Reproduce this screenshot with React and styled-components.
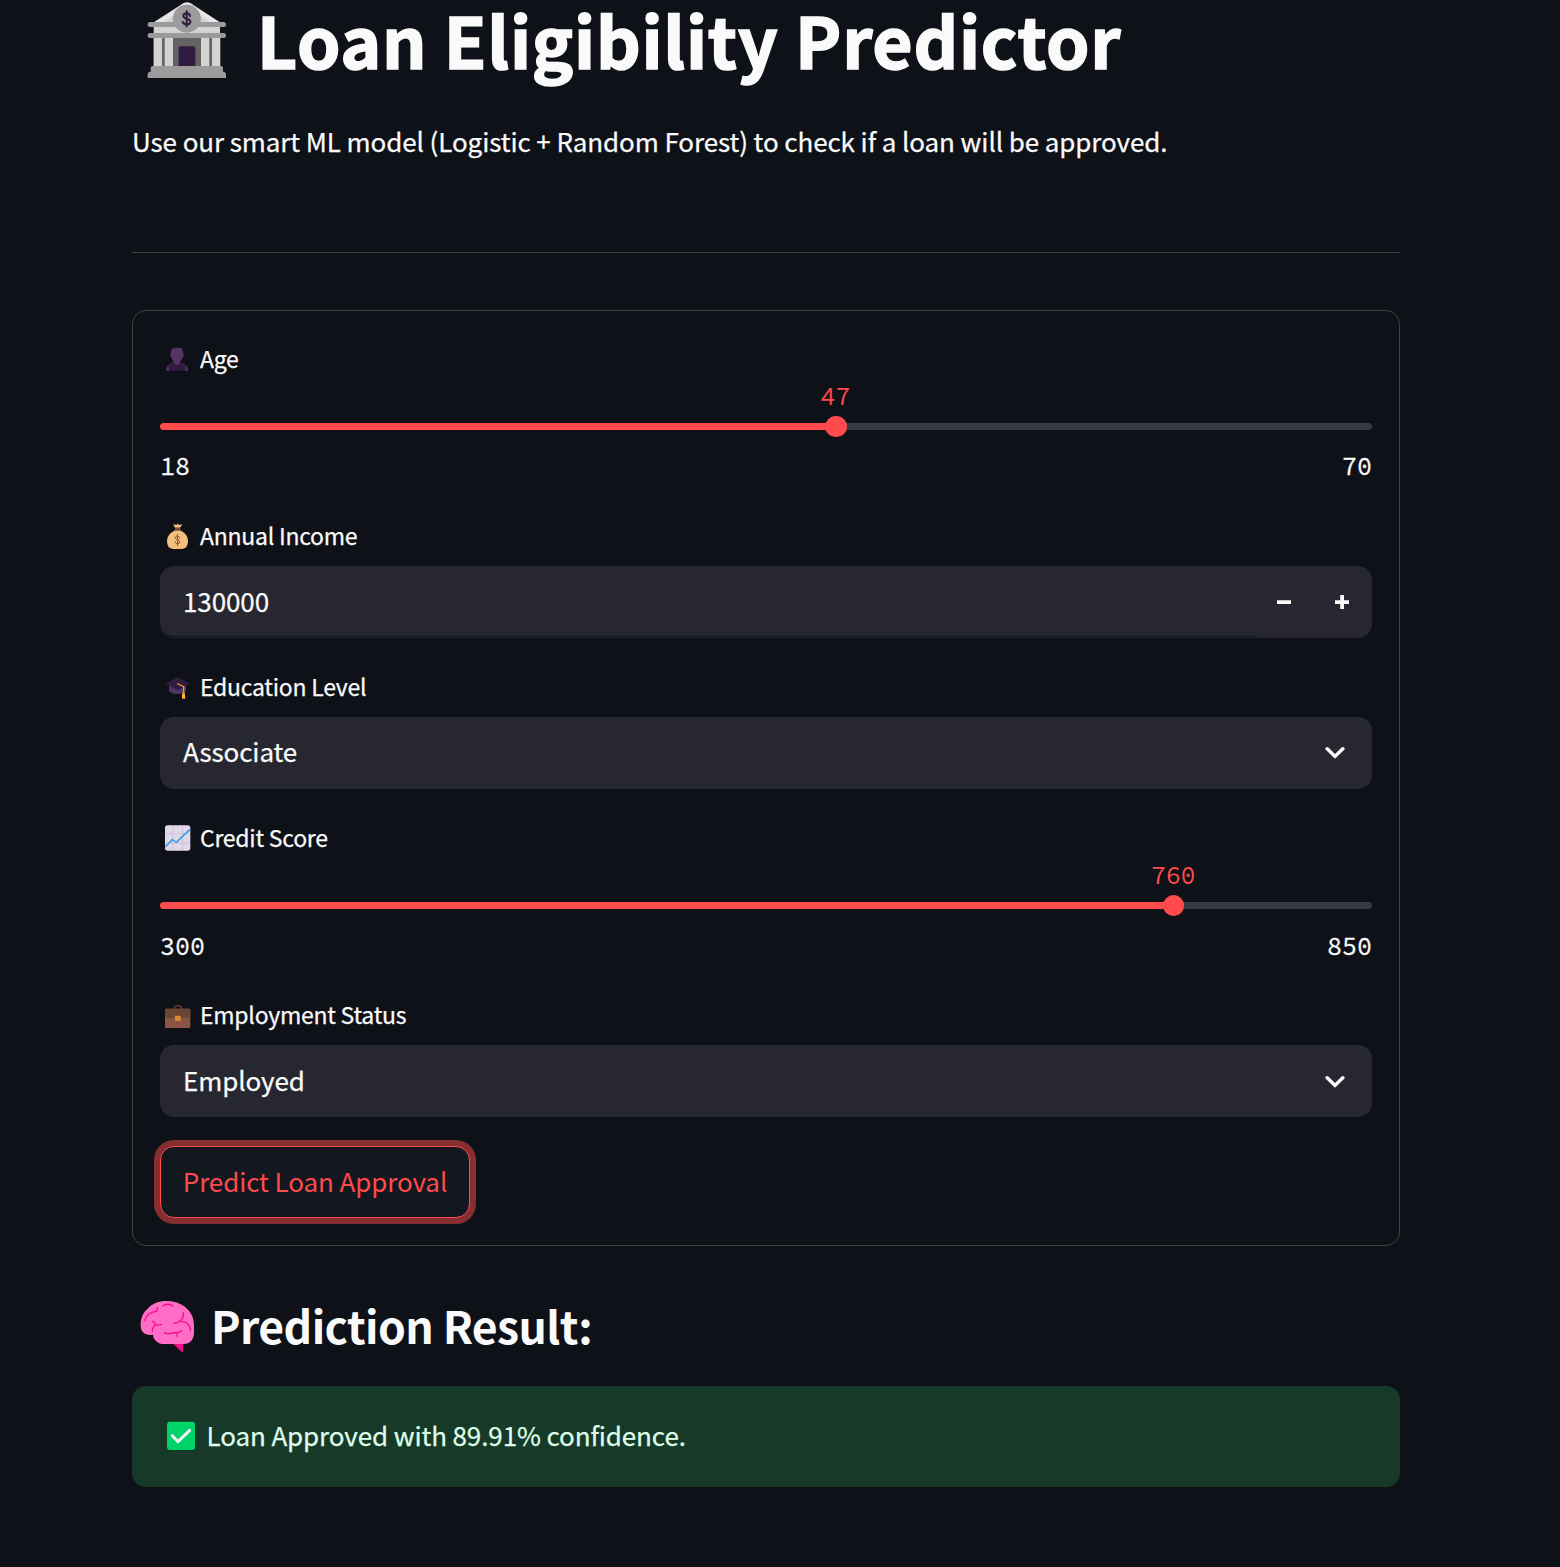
import React, { useState } from 'react';
import styled, { createGlobalStyle } from 'styled-components';

const GlobalStyle = createGlobalStyle`
  * { box-sizing: border-box; }
  html, body { margin: 0; background: #0e1117; }
  body, button, input {
    font-family: "Source Sans Pro", "Noto Sans CJK SC", "Open Sans", sans-serif;
    color: #fafafa;
  }
`;

const Page = styled.main`
  min-height: 1567px;
  padding: 0 160px 80px 132px;
  background: #0e1117;
`;

const Title = styled.h1`
  display: flex;
  height: 78px;
  margin: 0;
  font-size: 69.5px;
  font-weight: 700;
  line-height: 77px;
  letter-spacing: 0.75px;
  white-space: nowrap;
  -webkit-text-stroke: 1.6px #fafafa;
`;

const Intro = styled.p`
  margin: 42px 0 0;
  font-size: 26px;
  line-height: 42px;
  letter-spacing: -0.095px;
  white-space: nowrap;
  -webkit-text-stroke: 0.25px #fafafa;
`;

const Divider = styled.hr`
  height: 1px;
  margin: 90px 0 57px;
  border: 0;
  background: #3d4044;
`;

const Form = styled.form`
  display: flex;
  flex-direction: column;
  gap: 28px;
  height: 936px;
  padding: 27px;
  border: 1px solid #3d4044;
  border-radius: 14px;
`;

const Field = styled.div`
  display: flex;
  flex-direction: column;
`;

const Label = styled.label`
  display: flex;
  height: 42px;
  font-size: 23px;
  line-height: 41px;
  letter-spacing: -0.25px;
  white-space: nowrap;
  -webkit-text-stroke: 0.25px #fafafa;
`;

const Glyph = styled.svg`
  display: block;
  flex: none;
`;

const Control = styled.div`
  display: flex;
  height: 72px;
  margin-top: 9px;
  border-radius: 14px;
  background: #262730;
  font-size: 26px;
  letter-spacing: -0.1px;
  overflow: hidden;
`;

const NumberInput = styled.input`
  flex: 1;
  min-width: 0;
  height: 71px;
  padding: 0 22px 1px 23px;
  border: 0;
  border-bottom: 1px solid #0e1117;
  border-radius: 14px 0 0 14px;
  outline: 0;
  background: transparent;
  font-size: 26px;
  letter-spacing: -0.1px;
  -webkit-text-stroke: 0.25px #fafafa;
`;

const Steppers = styled.div`
  display: flex;
  width: 117px;
  padding-right: 1px;
`;

const StepButton = styled.button`
  display: grid;
  place-items: center;
  width: 58px;
  height: 72px;
  padding: 0;
  border: 0;
  background: transparent;
`;

const Selected = styled.span`
  flex: 1;
  padding-left: 23px;
  line-height: ${p => p.$line}px;
  -webkit-text-stroke: 0.25px #fafafa;
`;

const Arrow = styled.span`
  display: grid;
  place-items: center;
  width: 75px;
  height: ${p => p.$line + 5}px;
`;

const Track = styled.div`
  position: relative;
  height: 7px;
  margin-top: 43px;
  border-radius: 4px;
  background: linear-gradient(to right, #ff4b4b ${p => p.$fill}%, #363943 ${p => p.$fill}%);
`;

const Thumb = styled.div`
  position: absolute;
  top: 50%;
  left: ${p => p.$at}%;
  width: 21.8px;
  height: 21.8px;
  border-radius: 50%;
  background: #ff4b4b;
  transform: translate(-50%, -50%);
`;

const ThumbValue = styled.span`
  position: absolute;
  bottom: 26px;
  left: calc(50% - 0.5px);
  color: #ff4b4b;
  font: 25px/30px "Source Code Pro", "Liberation Mono", monospace;
  letter-spacing: -0.2px;
  transform: translateX(-50%);
`;

const Range = styled.div`
  display: flex;
  justify-content: space-between;
  height: 38px;
  margin-top: 19px;
  font: 25px/${p => p.$line}px "Source Code Pro", "Liberation Mono", monospace;
  -webkit-text-stroke: 0.3px #fafafa;
`;

const Submit = styled.button`
  align-self: flex-start;
  width: 310px;
  height: 72px;
  margin-top: 1px;
  padding: 0 0 4px;
  border: 1px solid #ff4b4b;
  border-radius: 14px;
  background: #13171f;
  box-shadow: 0 0 0 6px rgba(255, 75, 75, 0.5);
  color: #ff4b4b;
  font-size: 26px;
  letter-spacing: -0.1px;
  white-space: nowrap;
`;

const ResultTitle = styled.h2`
  display: flex;
  height: 70px;
  margin: 44px 0 26px;
  font-size: 44.5px;
  font-weight: 700;
  line-height: 69px;
  letter-spacing: -0.6px;
  white-space: nowrap;
`;

const Alert = styled.div`
  display: flex;
  height: 101px;
  padding-left: 28px;
  border-radius: 14px;
  background: #173928;
  color: #dffde9;
  font-size: 26px;
  line-height: 98px;
  letter-spacing: -0.11px;
  -webkit-text-stroke: 0.25px #dffde9;
`;

const Text = styled.span`
  margin-left: ${p => p.$shift || 0}px;
`;

const BankIcon = () => (
  <Glyph width="124" height="78" viewBox="6 0 372 234" strokeWidth="0">
    <path d="M69 68 160 10Q171 3 182 10L272 68Z" fill="#e6e6e6" />
    <path d="M98 68 128 48H214L244 68Z" fill="#d3d3d3" />
    <path d="M71 78H270V102H71Z" fill="#d3d3d3" />
    <path d="M71 112H270V202H71Z" fill="#636363" />
    <path d="M71 112H96V202H71ZM104 112H129V202H104ZM213 112H238V202H213ZM246 112H271V202H246Z" fill="#d3d3d3" />
    <rect x="53" y="66" width="235" height="15" rx="7.5" fill="#9b9b9b" />
    <rect x="53" y="99" width="235" height="15" rx="7.5" fill="#9b9b9b" />
    <circle cx="170.500" cy="56" r="42" fill="#9b9b9b" />
    <path d="M146 202V145Q146 139 152 139H190Q196 139 196 145V202Z" fill="#321b41" />
    <path d="M62 204Q62 198 68 198H273Q279 198 279 204V215Q288 216 288 223V234H53V223Q53 216 62 215Z" fill="#9b9b9b" />
    <path d="M180 48Q178 40 170 40Q160 40 160 48Q160 54 170 56Q181 58 181 65Q181 73 170 73Q161 73 158 66M170 34V79" fill="none" stroke="#321b41" strokeWidth="6" strokeLinecap="round" />
  </Glyph>
);

const PersonIcon = () => (
  <Glyph width="40" height="42" viewBox="30 9 120 126">
    <path d="M48 107Q49 90 59 85L73 80H90L103 85Q113 91 114 107Z" fill="#321b41" />
    <path d="M48 107Q49 96 54 93L58 107ZM114 107Q113 96 108 93L104 107ZM72 75H90V84L81 91 72 84Z" fill="#533566" />
    <path d="M63 54V50Q63 38 76 38H86Q99 38 99 50V54Q102 55 102 60Q102 66 98 67Q96 76 89 82Q81 88 73 82Q66 76 64 67Q60 66 60 60Q60 55 63 54Z" fill="#533566" />
  </Glyph>
);

const MoneyIcon = () => (
  <Glyph width="40" height="42" viewBox="30 15 120 126">
    <path d="M75 53 70 44Q72 41 76 44L80 45 83 40 87 45 91 44Q95 41 96 45L90 53Z" fill="#f3c07b" />
    <path d="M76 53H90L93 63H73Z" fill="#7d4e3c" />
    <path d="M73 62H93Q114 72 114 94Q114 116 96 117H69Q51 116 51 94Q51 72 73 62Z" fill="#f3c07b" />
    <path d="M89 84Q88 78 82 78Q76 78 76 83Q76 88 82 89Q89 90 89 96Q89 101 82 101Q76 101 75 95M82.500 73V106" fill="none" stroke="#8c5543" strokeWidth="3" strokeLinecap="round" />
  </Glyph>
);

const CapIcon = () => (
  <Glyph width="40" height="42" viewBox="30 3 120 126">
    <path d="M57 62H108V78Q100 87 83 87Q65 87 57 78Z" fill="#533566" />
    <path d="M47 56 83 36 120 56 86 75Q83 77 80 75Z" fill="#321b41" />
    <path d="M57 62 80 75Q83 77 86 75L108 62" fill="none" stroke="#43264f" strokeWidth="2" />
    <path d="M83 56 101 65V86" fill="none" stroke="#f9a72b" strokeWidth="3.500" strokeLinecap="round" />
    <path d="M98 83H104L106 101H96V88Z" fill="#ffb02e" />
  </Glyph>
);

const ChartIcon = () => (
  <Glyph width="40" height="42" viewBox="30 456 120 126">
    <rect x="45" y="481" width="76" height="76" rx="8" fill="#e1d8ec" />
    <path d="M68.500 483V555M97.500 483V555M47 505.500H119M47 534.500H119" stroke="#cdc4d6" strokeWidth="3.500" />
    <path d="M47 544 67 524 79 532 119 494" fill="none" stroke="#3a9fe5" strokeWidth="5" strokeLinejoin="round" strokeLinecap="round" />
  </Glyph>
);

const BriefcaseIcon = () => (
  <Glyph width="40" height="42" viewBox="45 12 120 126">
    <path d="M88 58V56Q88 47 98.500 47Q109 47 109 56V58" fill="none" stroke="#6d4534" strokeWidth="4" />
    <rect x="60" y="56" width="76" height="58" rx="4" fill="#8c5543" />
    <path d="M60 61Q60 56 65 56H131Q136 56 136 61V77Q136 84 129 84H67Q60 84 60 77Z" fill="#6d4534" />
    <rect x="90" y="77" width="17" height="16" rx="2" fill="#d9893b" />
  </Glyph>
);

const BrainIcon = () => (
  <Glyph width="78" height="70" viewBox="21 0 234 210">
    <path d="M143 157H174V183Q172 188 168 184L143 160Z" fill="#f70a8d" />
    <path d="M47 104C47 84 54 67 68 56C82 40 102 33 124 33C147 33 170 40 186 56C201 70 207 87 207 109V126C207 149 195 162 177 162H117C99 162 85 150 84 134C62 138 46 127 47 104Z" fill="#ff6dc6" />
    <path d="M58 92C64 75 76 65 95 64Q97 59 97 53M114 48C119 41 138 41 143 48M82 94Q90 96 93 104C82 110 82 117 82 125M93 104Q100 107 109 103M175 68C177 80 171 89 164 94Q156 100 147 99M164 94C183 93 194 102 197 121M118 129Q134 133 145 128C159 129 166 127 170 121M153 129Q158 132 157 139" fill="none" stroke="#f70a8d" strokeWidth="4" strokeLinecap="round" />
  </Glyph>
);

const CheckIcon = () => (
  <Glyph width="45" height="101" viewBox="105 288 135 303">
    <rect x="126" y="395" width="84" height="85" rx="9" fill="#00d26a" />
    <path d="M142 437 159 455 194 421" fill="none" stroke="#f4f4f4" strokeWidth="9" strokeLinecap="round" strokeLinejoin="round" />
  </Glyph>
);

const Chevron = () => (
  <Glyph width="20" height="14" viewBox="0 0 20 14">
    <path d="M2.200 2.800 10 10.400 17.800 2.800" fill="none" stroke="#fafafa" strokeWidth="3.500" strokeLinecap="round" strokeLinejoin="miter" />
  </Glyph>
);

const Minus = () => (
  <Glyph width="14" height="14" viewBox="0 0 14 14">
    <path d="M0 5.300H14V9H0Z" fill="#fafafa" />
  </Glyph>
);

const Plus = () => (
  <Glyph width="14" height="14" viewBox="0 0 14 14">
    <path d="M0 5.300H5.200V0H9V5.300H14V9H9V14H5.200V9H0Z" fill="#fafafa" />
  </Glyph>
);

function SliderField({ icon, label, min, max, value, line = 35 }) {
  const at = ((value - min) / (max - min)) * 100;
  return (
    <Field>
      <Label>{icon}<Text>{label}</Text></Label>
      <Track $fill={at}>
        <Thumb $at={at}><ThumbValue>{value}</ThumbValue></Thumb>
      </Track>
      <Range $line={line}><span>{min}</span><span>{max}</span></Range>
    </Field>
  );
}

function SelectField({ icon, label, value, line = 67 }) {
  return (
    <Field>
      <Label>{icon}<Text>{label}</Text></Label>
      <Control>
        <Selected $line={line}>{value}</Selected>
        <Arrow $line={line}><Chevron /></Arrow>
      </Control>
    </Field>
  );
}

export default function App() {
  const [income, setIncome] = useState(130000);
  return (
    <Page>
      <GlobalStyle />
      <Title><BankIcon /><Text $shift={1}>Loan Eligibility Predictor</Text></Title>
      <Intro>Use our smart ML model (Logistic + Random Forest) to check if a loan will be approved.</Intro>
      <Divider />
      <Form onSubmit={e => e.preventDefault()}>
        <SliderField icon={<PersonIcon />} label="Age" min={18} max={70} value={47} />
        <Field>
          <Label><MoneyIcon /><Text>Annual Income</Text></Label>
          <Control>
            <NumberInput value={income} onChange={e => setIncome(Number(e.target.value) || 0)} />
            <Steppers>
              <StepButton type="button" onClick={() => setIncome(income - 1000)}><Minus /></StepButton>
              <StepButton type="button" onClick={() => setIncome(income + 1000)}><Plus /></StepButton>
            </Steppers>
          </Control>
        </Field>
        <SelectField icon={<CapIcon />} label="Education Level" value="Associate" />
        <SliderField icon={<ChartIcon />} label="Credit Score" min={300} max={850} value={760} line={37} />
        <SelectField icon={<BriefcaseIcon />} label="Employment Status" value="Employed" line={69} />
        <Submit>Predict Loan Approval</Submit>
      </Form>
      <ResultTitle><BrainIcon /><Text $shift={1}>Prediction Result:</Text></ResultTitle>
      <Alert><CheckIcon /><Text $shift={1.5}>Loan Approved with 89.91% confidence.</Text></Alert>
    </Page>
  );
}
